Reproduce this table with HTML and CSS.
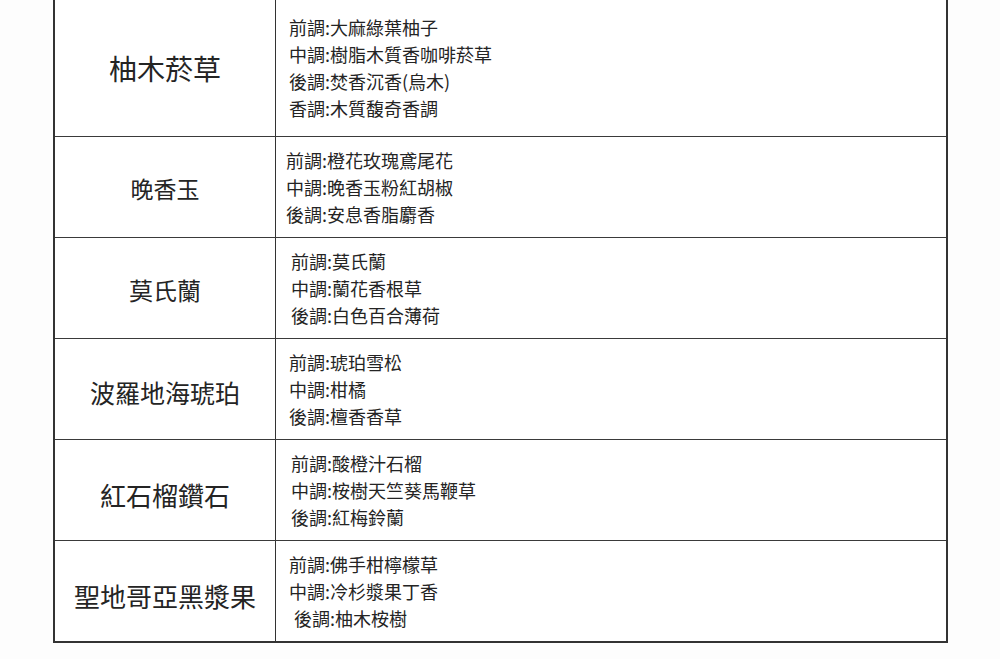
FILE: index.html
```html
<!DOCTYPE html>
<html lang="zh-Hant">
<head>
<meta charset="utf-8">
<title>香調表</title>
<link rel="stylesheet" href="styles.css">
</head>
<body>
<div class="sheet">
  <div class="row row-first">
    <div class="name name-1">柚木菸草</div>
    <div class="notes">
      <div class="note">前調:大麻綠葉柚子</div>
      <div class="note">中調:樹脂木質香咖啡菸草</div>
      <div class="note">後調:焚香沉香(烏木)</div>
      <div class="note">香調:木質馥奇香調</div>
    </div>
  </div>
  <div class="row">
    <div class="name name-2">晚香玉</div>
    <div class="notes notes-tight">
      <div class="note">前調:橙花玫瑰鳶尾花</div>
      <div class="note">中調:晚香玉粉紅胡椒</div>
      <div class="note">後調:安息香脂麝香</div>
    </div>
  </div>
  <div class="row">
    <div class="name name-3">莫氏蘭</div>
    <div class="notes notes-wide">
      <div class="note">前調:莫氏蘭</div>
      <div class="note">中調:蘭花香根草</div>
      <div class="note">後調:白色百合薄荷</div>
    </div>
  </div>
  <div class="row">
    <div class="name name-4">波羅地海琥珀</div>
    <div class="notes">
      <div class="note">前調:琥珀雪松</div>
      <div class="note">中調:柑橘</div>
      <div class="note">後調:檀香香草</div>
    </div>
  </div>
  <div class="row">
    <div class="name name-5">紅石榴鑽石</div>
    <div class="notes notes-wide">
      <div class="note">前調:酸橙汁石榴</div>
      <div class="note">中調:桉樹天竺葵馬鞭草</div>
      <div class="note">後調:紅梅鈴蘭</div>
    </div>
  </div>
  <div class="row row-last">
    <div class="name name-6">聖地哥亞黑漿果</div>
    <div class="notes">
      <div class="note">前調:佛手柑檸檬草</div>
      <div class="note">中調:冷杉漿果丁香</div>
      <div class="note note-indent">後調:柚木桉樹</div>
    </div>
  </div>
</div>
</body>
</html>
```

FILE: styles.css
```css
html, body {
  margin: 0;
  padding: 0;
  background: #fdfdfd;
}

body {
  font-family: "Noto Sans CJK TC", "Noto Sans CJK SC", "Noto Sans", sans-serif;
  color: #242424;
}

.sheet {
  width: 891px;
  margin-left: 53px;
  background: #ffffff;
  border-left: 2px solid #333333;
  border-right: 2px solid #333333;
}

.row {
  display: grid;
  grid-template-columns: 221px 1fr;
  height: 100px;
  border-bottom: 1px solid #3a3a3a;
}

.row-first {
  height: 136px;
}

.row-last {
  border-bottom: 2px solid #333333;
}

.name {
  display: flex;
  align-items: center;
  justify-content: center;
  border-right: 1px solid #333333;
  font-size: 24px;
  padding-top: 3px;
  box-sizing: border-box;
}

.name-1 { font-size: 28px; padding-top: 0; }
.name-2 { font-size: 23px; padding-top: 1px; }
.name-3 { font-size: 24px; }
.name-4 { font-size: 25px; padding-top: 6px; }
.name-5 { font-size: 26px; padding-top: 8px; }
.name-6 { font-size: 26px; padding-top: 8px; }

.notes {
  display: flex;
  flex-direction: column;
  justify-content: center;
  padding-left: 13px;
  font-size: 18px;
  line-height: 27px;
}

.notes-tight {
  padding-left: 10px;
}

.notes-wide {
  padding-left: 15px;
}

.note-indent {
  padding-left: 5px;
}
```
